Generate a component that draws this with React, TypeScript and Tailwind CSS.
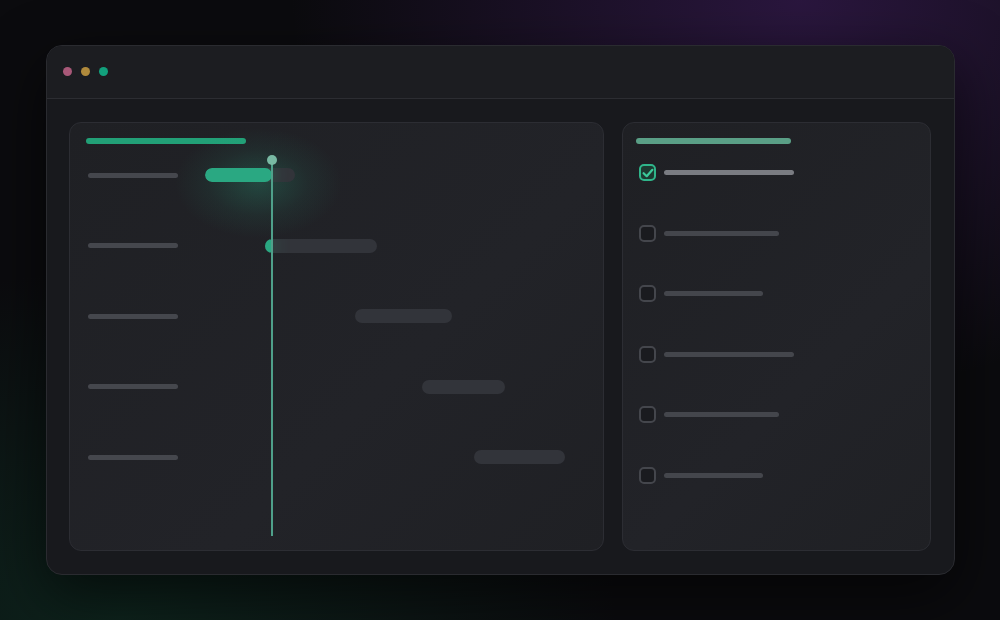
import React from 'react'

const TRACK_NOW = 186

const tasks = [
  { left: 119, width: 90 },
  { left: 179, width: 112 },
  { left: 269, width: 97 },
  { left: 336, width: 83 },
  { left: 388, width: 91 },
]

const checklist = [
  { done: true, width: 130 },
  { done: false, width: 115 },
  { done: false, width: 99 },
  { done: false, width: 130 },
  { done: false, width: 115 },
  { done: false, width: 99 },
]

function GanttRow({ left, width }: { left: number; width: number }) {
  const progress = Math.max(0, Math.min(width, TRACK_NOW - left))
  return (
    <div className="relative h-[14px] flex items-center">
      <div className="ml-[2px] w-[90px] h-[5px] rounded-full bg-[#45474d]" />
      {progress > 20 && (
        <div
          className="absolute top-[-40px] h-[110px] pointer-events-none bg-[radial-gradient(closest-side,rgba(42,168,130,0.28),rgba(42,168,130,0.08)_60%,transparent)]"
          style={{ left: left - 30, width: progress + 100 }}
        />
      )}
      <div
        className="absolute top-0 h-[14px] rounded-full bg-[#32343a] overflow-hidden"
        style={{ left, width }}
      >
        {progress > 0 && (
          <div
            className="h-full rounded-full bg-[#2aa882] shadow-[0_0_18px_rgba(42,200,140,0.45)]"
            style={{ width: progress }}
          />
        )}
      </div>
    </div>
  )
}

function CheckRow({ done, width }: { done: boolean; width: number }) {
  return (
    <div className="flex items-center h-[17px] pl-[3px] gap-[8px]">
      {done ? (
        <div className="w-[17px] h-[17px] rounded-[5px] border-2 border-[#2fb58a] bg-[#1d3a31] flex items-center justify-center">
          <svg width="12" height="12" viewBox="0 0 12 12" fill="none">
            <path d="M1.6 6.2 L4.7 9.2 L10.4 2.8" stroke="#3cc99a" strokeWidth="2.2" strokeLinecap="round" strokeLinejoin="round" />
          </svg>
        </div>
      ) : (
        <div className="w-[17px] h-[17px] rounded-[5px] border-2 border-[#44464c] bg-[#1a1b1f]" />
      )}
      <div
        className={done ? 'h-[5px] rounded-full bg-[#7a7c82]' : 'h-[5px] rounded-full bg-[#44464c]'}
        style={{ width }}
      />
    </div>
  )
}

export default function App() {
  return (
    <div className="w-full h-[620px] overflow-hidden pt-[45px] pl-[46px] bg-[#0b0b0e] bg-[image:radial-gradient(ellipse_at_80%_0%,rgba(80,36,120,0.45),transparent_45%),radial-gradient(ellipse_at_12%_100%,rgba(18,80,55,0.35),transparent_40%)]">
      <div className="w-[909px] h-[530px] rounded-[16px] border border-[#2a2b30] bg-[#18191d] shadow-[0_20px_60px_rgba(0,0,0,0.6)] overflow-hidden">
        <div className="h-[53px] border-b border-[#2c2d32] bg-[#1c1d21] flex items-center pl-[16px] pb-[1px] gap-[9px]">
          <div className="w-[9px] h-[9px] rounded-full bg-[#a85878]" />
          <div className="w-[9px] h-[9px] rounded-full bg-[#b08a3c]" />
          <div className="w-[9px] h-[9px] rounded-full bg-[#12a07c]" />
        </div>
        <div className="flex gap-[18px] pt-[23px] pb-[23px] pl-[22px] pr-[23px]">
          <div className="relative w-[535px] h-[429px] rounded-[12px] border border-[#2c2d33] bg-[linear-gradient(135deg,#1f2024,#222328_60%,#1f2024)] px-[16px] pt-[15px]">
            <div className="w-[160px] h-[6px] rounded-full bg-[#22a077]" />
            <div className="mt-[24px] flex flex-col gap-[56.5px]">
              {tasks.map((t, i) => (
                <GanttRow key={i} left={t.left} width={t.width} />
              ))}
            </div>
            <div className="absolute left-[201px] top-[37px] w-[2px] h-[376px] bg-[#4fa08a]" />
            <div className="absolute left-[197px] top-[32px] w-[10px] h-[10px] rounded-full bg-[#79b9a3]" />
          </div>
          <div className="flex-1 h-[429px] rounded-[12px] border border-[#2c2d33] bg-[linear-gradient(135deg,#1f2024,#222328_60%,#1f2024)] px-[13px] pt-[15px]">
            <div className="w-[155px] h-[6px] rounded-full bg-[#5a9f86]" />
            <div className="mt-[20px] flex flex-col gap-[43.5px]">
              {checklist.map((c, i) => (
                <CheckRow key={i} done={c.done} width={c.width} />
              ))}
            </div>
          </div>
        </div>
      </div>
    </div>
  )
}
